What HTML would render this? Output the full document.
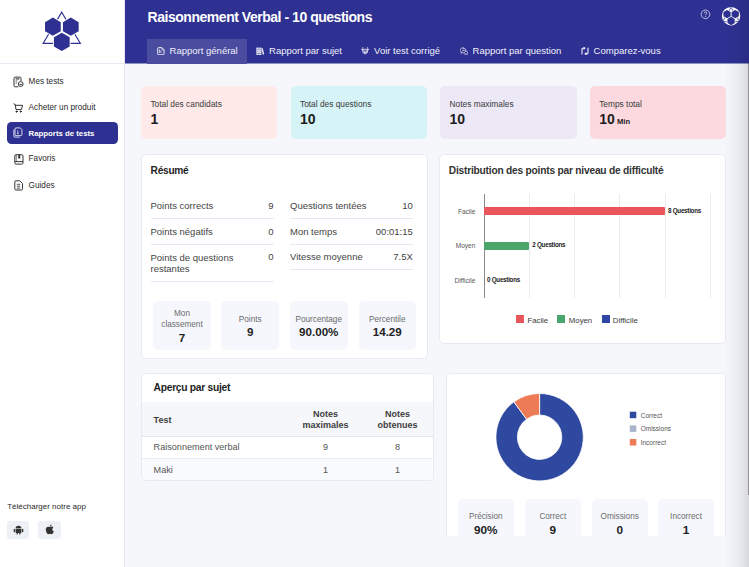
<!DOCTYPE html>
<html><head><meta charset="utf-8">
<style>
*{box-sizing:border-box;margin:0;padding:0}
html,body{width:749px;height:567px;overflow:hidden;background:#f6f7fb;font-family:"Liberation Sans",sans-serif;color:#222}
.abs{position:absolute;white-space:nowrap}
#sidebar{position:absolute;left:0;top:0;width:125px;height:567px;background:#fff;border-right:1px solid #e6e7f2}
.nav{position:absolute;left:7px;width:110.5px;height:21.2px;border-radius:4.5px;font-size:8.2px;color:#2a2a2a}
.nav span{position:absolute;left:21.6px;white-space:nowrap}
.nav.active{background:#2e3192;color:#fff;font-weight:700}
#header{position:absolute;left:125px;top:0;width:624px;height:64px;background:#2e3192;border-bottom:1px solid #9294c6}
#title{position:absolute;left:22.6px;top:9.4px;font-size:14px;font-weight:700;color:#fff;letter-spacing:-0.47px;white-space:nowrap}
.tab{position:absolute;top:39px;height:25px;font-size:9.5px;color:#f0f0fa;white-space:nowrap}
.tab span{position:absolute;top:6.3px}
.tab.active{background:#4a4d9f}
.stat{position:absolute;top:86px;height:53px;width:136.4px;border-radius:5px}
.stat .l{position:absolute;left:9.4px;top:13.3px;font-size:8.35px;color:#3a3a3a;white-space:nowrap}
.stat .v{position:absolute;left:9.4px;top:25px;font-size:14px;font-weight:700;color:#1d1d1d;white-space:nowrap}
.card{position:absolute;background:#fff;border:1px solid #e8eaf3;border-radius:5px}
.ctitle{position:absolute;font-size:10px;font-weight:700;color:#1f1f1f;white-space:nowrap}
.row{position:absolute;font-size:9.5px;color:#444;white-space:nowrap}
.hr{position:absolute;height:1px;background:#e5e7f3}
.mini{position:absolute;background:#f5f7fc;border-radius:5px;text-align:center}
.mini .ml{font-size:8.2px;color:#6b6b6b;line-height:11.3px;white-space:nowrap}
.mini .mv{font-size:11.6px;font-weight:700;color:#222;line-height:13px}
.gl{position:absolute;top:193.7px;width:1px;height:104.5px;background:#ececec}
.cl{position:absolute;font-size:6.5px;color:#555;white-space:nowrap}
.ql{position:absolute;font-size:6.3px;letter-spacing:-0.28px;font-weight:700;color:#222;white-space:nowrap}
.lg{position:absolute;font-size:7.8px;color:#3a3a3a;white-space:nowrap}
</style></head><body>

<div id="sidebar">
<svg class="abs" style="left:0;top:0" width="124" height="63" viewBox="0 0 124 63"><g transform="translate(0.000 0.000) scale(1.0000)"><path d="M61.7 12.2 L80.3 43.3 L43.2 43.3 Z" fill="none" stroke="#2e3192" stroke-width="1.2" stroke-linejoin="miter"/><path d="M52.90 16.56 L61.68 21.63 L61.68 31.77 L52.90 36.84 L44.12 31.77 L44.12 21.63 Z" fill="#fff"/><path d="M70.80 16.56 L79.58 21.63 L79.58 31.77 L70.80 36.84 L62.02 31.77 L62.02 21.63 Z" fill="#fff"/><path d="M61.80 31.76 L70.58 36.83 L70.58 46.97 L61.80 52.04 L53.02 46.97 L53.02 36.83 Z" fill="#fff"/><path d="M52.90 17.60 L60.78 22.15 L60.78 31.25 L52.90 35.80 L45.02 31.25 L45.02 22.15 Z" fill="#2e3192"/><path d="M70.80 17.60 L78.68 22.15 L78.68 31.25 L70.80 35.80 L62.92 31.25 L62.92 22.15 Z" fill="#2e3192"/><path d="M61.80 32.80 L69.68 37.35 L69.68 46.45 L61.80 51.00 L53.92 46.45 L53.92 37.35 Z" fill="#2e3192"/></g></svg>
<div class="abs" style="left:0;top:63px;width:124px;height:1px;background:#e9eaf3"></div>
<svg class="abs" style="left:13.2px;top:75.6px" width="11" height="12" viewBox="0 0 11 12" fill="none" stroke="#2a2a2a" stroke-width="0.95">
   <path d="M5.3 10.8H2.2Q1 10.8 1 9.6V2.3Q1 1.1 2.2 1.1H6.8Q8 1.1 8 2.3V5.1"/>
   <path d="M2.6 2.9H6.4" stroke-width="1.1"/>
   <path d="M2.6 5H4.3M2.6 7H3.9" stroke-width="0.8"/>
   <circle cx="7.7" cy="8.1" r="2.4"/>
   <path d="M6.6 8.5H8.8" stroke-width="1"/>
 </svg>
<svg class="abs" style="left:13px;top:102.5px" width="11" height="10" viewBox="0 0 11 10" fill="none" stroke="#2a2a2a" stroke-width="0.95" stroke-linecap="round" stroke-linejoin="round">
   <path d="M0.9 0.9L2.2 1.4L3 6.6H8.4L9.6 2.3H2.5"/>
   <circle cx="3.6" cy="8.6" r="0.6" fill="#2a2a2a"/><circle cx="7.7" cy="8.6" r="0.6" fill="#2a2a2a"/>
 </svg>
<svg class="abs" style="left:13.6px;top:153.6px" width="10" height="11" viewBox="0 0 10 11" fill="none" stroke="#2a2a2a" stroke-width="0.95">
   <rect x="0.8" y="0.7" width="8.2" height="9.4" rx="1.3"/>
   <path d="M0.8 7.6H9"/>
   <rect x="4.3" y="0.7" width="1.9" height="3.8" fill="#2a2a2a" stroke="none"/>
   <path d="M2.3 0.9V7.4" stroke-width="0.6"/>
 </svg>
<svg class="abs" style="left:13.6px;top:179.6px" width="10" height="11" viewBox="0 0 10 11" fill="none" stroke="#2a2a2a" stroke-width="0.95">
   <path d="M1.8 0.8H5.8L8.5 3.5V8.9Q8.5 10 7.4 10H1.8Q0.8 10 0.8 8.9V1.8Q0.8 0.8 1.8 0.8Z"/>
   <path d="M2.8 4.3H6.2M2.8 6.2H6.2M2.8 8.1H6.2" stroke-width="0.8"/>
 </svg>
<div class="nav" style="top:73px"><span style="top:3.7px">Mes tests</span></div>
<div class="nav" style="top:99px"><span style="top:4.4px">Acheter un produit</span></div>
<div class="nav active" style="top:122.2px;height:21.4px"><span style="top:7px;font-size:7.8px">Rapports de tests</span></div>
<svg class="abs" style="left:13.2px;top:127.4px" width="10" height="11" viewBox="0 0 10 11" fill="none" stroke="#e6e7f5" stroke-width="0.9">
   <path d="M3 0.9H7.2L8.9 2.6V7.6Q8.9 8.6 7.9 8.6H3Q2 8.6 2 7.6V1.9Q2 0.9 3 0.9Z"/>
   <path d="M0.9 2.6V9.2Q0.9 10.1 1.8 10.1H6.8" />
   <path d="M4.8 3.4V6.6M4 6.6H5.8" stroke-width="0.8"/>
 </svg>
<div class="nav" style="top:151px"><span style="top:3.3px">Favoris</span></div>
<div class="nav" style="top:177px"><span style="top:4.2px">Guides</span></div>
<div class="abs" style="left:7.2px;top:501.8px;font-size:8px;color:#2a2a2a">Télécharger notre app</div>
<div class="abs" style="left:7.2px;top:520.8px;width:22.3px;height:17.8px;background:#edf0f7;border-radius:3px"></div>
<div class="abs" style="left:38.3px;top:520.8px;width:22.4px;height:17.8px;background:#edf0f7;border-radius:3px"></div>
<svg class="abs" style="left:13px;top:524px" width="11" height="11" viewBox="0 0 11 11">
  <path d="M2.6 4.3A2.9 2.6 0 0 1 8.4 4.3Z" fill="#333"/>
  <rect x="2.6" y="4.8" width="5.8" height="4.2" rx="0.5" fill="#333"/>
  <rect x="0.7" y="4.8" width="1.3" height="3.4" rx="0.6" fill="#333"/>
  <rect x="9" y="4.8" width="1.3" height="3.4" rx="0.6" fill="#333"/>
  <rect x="3.6" y="8.5" width="1.2" height="2" rx="0.5" fill="#333"/>
  <rect x="6.2" y="8.5" width="1.2" height="2" rx="0.5" fill="#333"/>
</svg>
<svg class="abs" style="left:45px;top:524px" width="10" height="11" viewBox="0 0 10 11">
  <path d="M4.9 3.1C4.2 2.6 3.6 2.6 3 2.7C1.6 2.9 0.8 4.1 0.8 5.6C0.8 7.6 2 10.2 3.3 10.2C3.9 10.2 4.2 9.8 4.9 9.8C5.6 9.8 5.8 10.2 6.5 10.2C7.5 10.2 8.4 8.6 8.8 7.5C7.8 7.1 7.3 6.2 7.3 5.3C7.3 4.5 7.7 3.8 8.4 3.3C7.9 2.7 7.2 2.5 6.6 2.6C5.9 2.6 5.5 3.0 4.9 3.1Z" fill="#333"/>
  <path d="M4.9 2.4C4.9 1.4 5.6 0.6 6.6 0.5C6.6 1.5 5.9 2.3 4.9 2.4Z" fill="#333"/>
</svg>
</div>
<div id="header">
<div id="title">Raisonnement Verbal - 10 questions</div>
<div class="tab active" style="left:22px;width:99.5px"><span style="left:22.6px">Rapport général</span></div>
<div class="tab" style="left:121.5px;width:99.5px"><span style="left:22.6px">Rapport par sujet</span></div>
<div class="tab" style="left:226px;width:99.5px"><span style="left:23.1px">Voir test corrigé</span></div>
<div class="tab" style="left:325px;width:120px"><span style="left:22.6px">Rapport par question</span></div>
<div class="tab" style="left:446px;width:90px"><span style="left:22.6px">Comparez-vous</span></div>
</div>
<svg class="abs" style="left:156.9px;top:46.9px" width="8.4" height="8.4" viewBox="0 0 9 9" fill="none" stroke="#f4f4fb" stroke-width="1">
  <path d="M1.8 0.7H5.4L7.6 2.9V7.2Q7.6 8.3 6.5 8.3H1.8Q0.7 8.3 0.7 7.2V1.8Q0.7 0.7 1.8 0.7Z"/>
  <path d="M2.7 2.6V6.4M4.2 3.8V6.4" stroke-width="0.8"/>
  <path d="M5.2 0.9V2.6Q5.2 3.2 5.8 3.2H7.4" stroke-width="0.8"/>
</svg>
<svg class="abs" style="left:256px;top:47px" width="8.4" height="8.4" viewBox="0 0 10 10">
  <rect x="0.4" y="0.6" width="3" height="8.8" rx="0.8" fill="#e9e9f6"/>
  <rect x="3.7" y="0.6" width="2.7" height="8.8" rx="0.6" fill="#e9e9f6"/>
  <path d="M6.4 1.8L8 1.3L9.8 8.6L8.2 9.2Z" fill="#e9e9f6"/>
  <circle cx="1.9" cy="5" r="0.45" fill="#2e3192"/><circle cx="5" cy="5" r="0.45" fill="#2e3192"/>
  <path d="M0.6 2.6H6.2M0.6 7.6H6.2" stroke="#2e3192" stroke-width="0.5"/>
</svg>
<svg class="abs" style="left:360.8px;top:46.8px" width="8.4" height="8.4" viewBox="0 0 10 10" fill="none" stroke="#e9e9f6" stroke-width="1.05" stroke-linecap="round">
  <path d="M0.9 2.8H9.1"/>
  <circle cx="2.2" cy="1.1" r="0.7" fill="#e9e9f6" stroke="none"/><circle cx="7.8" cy="1.1" r="0.7" fill="#e9e9f6" stroke="none"/>
  <path d="M1.8 2.8L2.5 6.8Q5 9.8 7.5 6.8L8.2 2.8"/>
  <path d="M3.4 4.3L4.2 7L5 5.3L5.8 7L6.6 4.3"/>
</svg>
<svg class="abs" style="left:459.8px;top:46.6px" width="8.4" height="8.4" viewBox="0 0 10 10" fill="none" stroke="#e9e9f6" stroke-width="0.9" stroke-linecap="round" stroke-linejoin="round">
  <path d="M4 1.2A3 2.6 0 0 0 1.4 5.8L1.2 7.4L2.6 6.6A3 2.6 0 0 0 6.8 3.6A3 2.6 0 0 0 4 1.2Z"/>
  <path d="M7.4 4.6A2.4 2.2 0 0 1 8.4 8.2L8.6 9L7.6 8.6A2.4 2.2 0 0 1 4.8 8"/>
  <path d="M3 4.1H5.2" />
</svg>
<svg class="abs" style="left:580.6px;top:46.9px" width="8" height="8" viewBox="0 0 8 8" fill="none" stroke="#e9e9f6" stroke-width="1.15" stroke-linecap="round" stroke-linejoin="round">
  <path d="M1 7V2.2Q1 1.2 2 1.2H3.6"/>
  <path d="M2.9 0.4L3.8 1.2L2.9 2"/>
  <path d="M7 1V5.8Q7 6.8 6 6.8H4.4"/>
  <path d="M5.1 6L4.2 6.8L5.1 7.6"/>
</svg>
<svg class="abs" style="left:698px;top:7px" width="16" height="16" viewBox="698 7 16 16">
  <circle cx="705.5" cy="14.3" r="4.3" fill="none" stroke="#dcdcf0" stroke-width="0.8"/>
  <path d="M704.2 13.3Q704.2 11.9 705.5 11.9Q706.8 11.9 706.8 13.1Q706.8 13.8 706 14.3Q705.5 14.6 705.5 15.3" fill="none" stroke="#dcdcf0" stroke-width="0.8"/>
  <circle cx="705.5" cy="16.6" r="0.5" fill="#dcdcf0"/>
</svg>
<svg class="abs" style="left:718px;top:3px" width="26" height="26" viewBox="718 3 26 26">
  <circle cx="731.1" cy="16.1" r="9.2" fill="#fff"/>
  <g transform="translate(702.796 1.819) scale(0.4580)"><path d="M61.7 12.2 L80.3 43.3 L43.2 43.3 Z" fill="none" stroke="#2e3192" stroke-width="1.6" stroke-linejoin="miter"/><path d="M52.90 16.14 L62.05 21.42 L62.05 31.98 L52.90 37.26 L43.75 31.98 L43.75 21.42 Z" fill="#fff"/><path d="M70.80 16.14 L79.95 21.42 L79.95 31.98 L70.80 37.26 L61.65 31.98 L61.65 21.42 Z" fill="#fff"/><path d="M61.80 31.34 L70.95 36.62 L70.95 47.18 L61.80 52.46 L52.65 47.18 L52.65 36.62 Z" fill="#fff"/><path d="M52.90 17.60 L60.78 22.15 L60.78 31.25 L52.90 35.80 L45.02 31.25 L45.02 22.15 Z" fill="#2e3192"/><path d="M70.80 17.60 L78.68 22.15 L78.68 31.25 L70.80 35.80 L62.92 31.25 L62.92 22.15 Z" fill="#2e3192"/><path d="M61.80 32.80 L69.68 37.35 L69.68 46.45 L61.80 51.00 L53.92 46.45 L53.92 37.35 Z" fill="#2e3192"/></g>
</svg>
<div class="stat" style="left:141px;background:#ffe9e9"><div class="l">Total des candidats</div><div class="v">1</div></div>
<div class="stat" style="left:290.6px;background:#d6f3f7"><div class="l">Total des questions</div><div class="v">10</div></div>
<div class="stat" style="left:440.2px;background:#ece8f6"><div class="l">Notes maximales</div><div class="v">10</div></div>
<div class="stat" style="left:589.8px;background:#fcd9df"><div class="l">Temps total</div><div class="v">10<span style="font-size:7.6px;margin-left:2.2px">Min</span></div></div>
<div class="card" style="left:141px;top:154px;width:287px;height:205px"></div>
<div class="card" style="left:439px;top:154px;width:287px;height:190px"></div>
<div class="card" style="left:141px;top:373px;width:293px;height:108px"></div>
<div class="abs" style="left:446px;top:373px;width:280px;height:162.5px;overflow:hidden"><div class="card" style="left:0;top:0;width:280px;height:200px"></div></div>
<div class="ctitle" style="left:150.6px;top:164.8px;font-size:10.2px;letter-spacing:-0.3px">Résumé</div>
<div class="row" style="left:150.5px;top:199.9px">Points corrects</div><div class="row" style="right:475.5px;top:199.9px">9</div>
<div class="row" style="left:150.5px;top:225.6px">Points négatifs</div><div class="row" style="right:475.5px;top:225.6px">0</div>
<div class="row" style="left:150.5px;top:251.6px;line-height:11px">Points de questions<br>restantes</div><div class="row" style="right:475.5px;top:250.6px">0</div>
<div class="hr" style="left:150.5px;top:218px;width:123.3px"></div>
<div class="hr" style="left:150.5px;top:243.6px;width:123.3px"></div>
<div class="hr" style="left:150.5px;top:280.7px;width:123.3px"></div>
<div class="row" style="left:290px;top:199.9px">Questions tentées</div><div class="row" style="right:336.2px;top:199.9px">10</div>
<div class="row" style="left:290px;top:225.6px">Mon temps</div><div class="row" style="right:336.2px;top:225.6px">00:01:15</div>
<div class="row" style="left:290px;top:250.6px">Vitesse moyenne</div><div class="row" style="right:336.2px;top:250.6px">7.5X</div>
<div class="hr" style="left:290px;top:218px;width:122.8px"></div>
<div class="hr" style="left:290px;top:243.6px;width:122.8px"></div>
<div class="hr" style="left:290px;top:268.7px;width:122.8px"></div>
<div class="mini" style="left:153px;top:301px;width:58px;height:49px;padding-top:7.1px"><div class="ml">Mon<br>classement</div><div class="mv" style="margin-top:0.3px">7</div></div>
<div class="mini" style="left:221.2px;top:301px;width:58px;height:49px;padding-top:12.7px"><div class="ml">Points</div><div class="mv" style="margin-top:0.5px">9</div></div>
<div class="mini" style="left:290px;top:301px;width:57.5px;height:49px;padding-top:12.7px"><div class="ml">Pourcentage</div><div class="mv" style="margin-top:0.5px">90.00%</div></div>
<div class="mini" style="left:358.5px;top:301px;width:57.5px;height:49px;padding-top:12.7px"><div class="ml">Percentile</div><div class="mv" style="margin-top:0.5px">14.29</div></div>
<div class="ctitle" style="left:448.8px;top:164.9px;font-size:10.2px;letter-spacing:-0.21px;color:#333">Distribution des points par niveau de difficulté</div>
<div class="gl" style="left:528.9px"></div>
<div class="gl" style="left:574.4px"></div>
<div class="gl" style="left:619px"></div>
<div class="gl" style="left:664.5px"></div>
<div class="gl" style="left:709.8px"></div>
<div class="gl" style="left:483.5px;background:#8a8a8a"></div>
<div class="abs" style="left:484px;top:207.4px;width:180.6px;height:8px;background:#e9575c;border-radius:0 1px 1px 0"></div>
<div class="abs" style="left:484px;top:241.8px;width:44.9px;height:8px;background:#4aa66b;border-radius:0 1px 1px 0"></div>
<div class="cl" style="right:273.7px;top:207.9px">Facile</div>
<div class="cl" style="right:273.7px;top:241.6px">Moyen</div>
<div class="cl" style="right:273.7px;top:277.1px">Difficile</div>
<div class="ql" style="left:668px;top:207.1px">8 Questions</div>
<div class="ql" style="left:532.3px;top:241px">2 Questions</div>
<div class="ql" style="left:487px;top:275.7px">0 Questions</div>
<div class="abs" style="left:516px;top:315px;width:8px;height:8px;background:#e9575c"></div>
<div class="abs" style="left:557.3px;top:315px;width:8px;height:8px;background:#4aa66b"></div>
<div class="abs" style="left:601.5px;top:315px;width:8px;height:8px;background:#2f46a3"></div>
<div class="lg" style="left:527.4px;top:315.8px">Facile</div>
<div class="lg" style="left:568.8px;top:315.8px">Moyen</div>
<div class="lg" style="left:612.8px;top:315.8px">Difficile</div>
<div class="abs" style="left:142px;top:402.4px;width:291px;height:34.2px;background:#f6f7fb;border-bottom:1px solid #e2e4f0"></div>
<div class="abs" style="left:142px;top:458px;width:291px;height:1px;background:#eceef5"></div>
<div class="abs" style="left:142px;top:459px;width:291px;height:21px;background:#f9fafd;border-radius:0 0 4px 4px"></div>
<div class="ctitle" style="left:153.6px;top:382px;font-size:10.3px;letter-spacing:-0.3px">Aperçu par sujet</div>
<div class="abs" style="left:153.6px;top:414.6px;font-size:9px;font-weight:700;color:#3d3d3d">Test</div>
<div class="abs" style="left:295.5px;width:60px;text-align:center;top:408.8px;font-size:9px;font-weight:700;color:#3d3d3d;line-height:11px">Notes<br>maximales</div>
<div class="abs" style="left:367.5px;width:60px;text-align:center;top:408.8px;font-size:9px;font-weight:700;color:#3d3d3d;line-height:11px">Notes<br>obtenues</div>
<div class="abs" style="left:153.6px;top:441.8px;font-size:9.1px;color:#555">Raisonnement verbal</div>
<div class="abs" style="left:295.5px;width:60px;text-align:center;top:441.8px;font-size:9.1px;color:#555">9</div>
<div class="abs" style="left:367.5px;width:60px;text-align:center;top:441.8px;font-size:9.1px;color:#555">8</div>
<div class="abs" style="left:153.6px;top:464.9px;font-size:9.1px;color:#555">Maki</div>
<div class="abs" style="left:295.5px;width:60px;text-align:center;top:464.9px;font-size:9.1px;color:#555">1</div>
<div class="abs" style="left:367.5px;width:60px;text-align:center;top:464.9px;font-size:9.1px;color:#555">1</div>
<svg class="abs" style="left:446px;top:373px" width="280" height="162" viewBox="446 373 280 162">
  <g transform="translate(539.6 437.2)">
    <path fill="#2f49a0" stroke="#fff" stroke-width="0.8" d="M0.00 -43.70A43.7 43.7 0 1 1 -25.69 -35.35L-13.05 -17.96A22.2 22.2 0 1 0 0.00 -22.20Z"/>
    <path fill="#ec7b56" stroke="#fff" stroke-width="0.8" d="M-25.69 -35.35A43.7 43.7 0 0 1 -0.00 -43.70L-0.00 -22.20A22.2 22.2 0 0 0 -13.05 -17.96Z"/>
  </g>
  <rect x="629.8" y="411.7" width="6.5" height="6.5" fill="#2f49a0"/>
  <rect x="629.8" y="425.4" width="6.5" height="6.5" fill="#a8b5cc"/>
  <rect x="629.8" y="439" width="6.5" height="6.5" fill="#ec7b56"/>
</svg>
<div class="abs" style="left:640.7px;top:412px;font-size:6.5px;color:#555">Correct</div>
<div class="abs" style="left:640.7px;top:425.2px;font-size:6.5px;color:#555">Omissions</div>
<div class="abs" style="left:640.7px;top:439.3px;font-size:6.5px;color:#555">Incorrect</div>
<div class="abs" style="left:446px;top:373px;width:280px;height:162.5px;overflow:hidden">
<div class="mini" style="left:11.8px;top:125.5px;width:56px;height:48px;padding-top:12.8px"><div class="ml">Précision</div><div class="mv" style="margin-top:1px;font-size:11.8px">90%</div></div>
<div class="mini" style="left:78.5px;top:125.5px;width:56.6px;height:48px;padding-top:12.8px"><div class="ml">Correct</div><div class="mv" style="margin-top:1px;font-size:11.8px">9</div></div>
<div class="mini" style="left:145.6px;top:125.5px;width:56.2px;height:48px;padding-top:12.8px"><div class="ml">Omissions</div><div class="mv" style="margin-top:1px;font-size:11.8px">0</div></div>
<div class="mini" style="left:211.9px;top:125.5px;width:56.3px;height:48px;padding-top:12.8px"><div class="ml">Incorrect</div><div class="mv" style="margin-top:1px;font-size:11.8px">1</div></div>
</div>
<div class="abs" style="left:724px;top:0;width:25px;height:567px;background:linear-gradient(to right,rgba(10,10,30,0),rgba(10,10,30,0.035) 44%,rgba(10,10,30,0.075) 75%,rgba(10,10,30,0.135))"></div>
<div class="abs" style="left:748px;top:63px;width:1px;height:432px;background:rgba(0,0,0,0.32)"></div>
</body></html>
